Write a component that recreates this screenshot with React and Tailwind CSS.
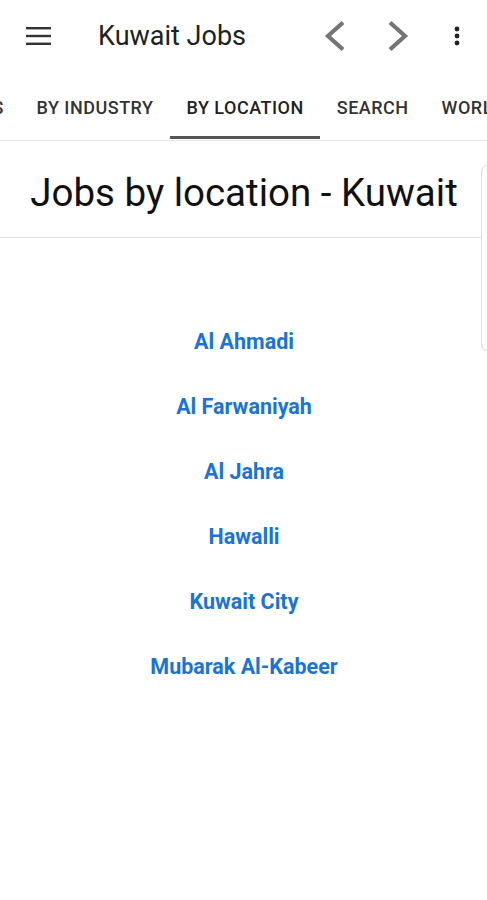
import React from 'react';

const tabs = ['BY INDUSTRY', 'BY LOCATION', 'SEARCH', 'WORLD JOBS'];

const locations = ['Al Ahmadi', 'Al Farwaniyah', 'Al Jahra', 'Hawalli', 'Kuwait City', 'Mubarak Al-Kabeer'];

const App = () => {
    return (
        <div className="w-[487px] h-[900px] bg-white overflow-hidden" style={{ fontFamily: 'Roboto, "Liberation Sans", sans-serif' }}>
            {/* Toolbar */}
            <div className="h-[72px] flex items-center">
                <svg className="ml-[26px]" width="25" height="18" viewBox="0 0 25 18">
                    <rect x="0" y="0" width="25" height="2.4" fill="#333" />
                    <rect x="0" y="7.8" width="25" height="2.4" fill="#333" />
                    <rect x="0" y="15.6" width="25" height="2.4" fill="#333" />
                </svg>
                <div className="ml-[47px] text-[27px] text-[#212121] leading-none">Kuwait Jobs</div>
                <div className="ml-auto flex items-center">
                    <svg width="26" height="32" viewBox="0 0 26 32">
                        <path d="M22 2.5 L7 16 L22 29.5" fill="none" stroke="#757575" strokeWidth="4.2" />
                    </svg>
                    <svg width="26" height="32" viewBox="0 0 26 32" className="ml-[39px]">
                        <path d="M4 2.5 L19 16 L4 29.5" fill="none" stroke="#757575" strokeWidth="4.2" />
                    </svg>
                    <svg width="6" height="20" viewBox="0 0 6 20" className="ml-[42px] mr-[27px]">
                        <circle cx="3" cy="3" r="2.4" fill="#222" />
                        <circle cx="3" cy="10" r="2.4" fill="#222" />
                        <circle cx="3" cy="17" r="2.4" fill="#222" />
                    </svg>
                </div>
            </div>

            {/* Tabs */}
            <div className="h-[69px] border-b border-[#e4e4e4] flex items-stretch overflow-hidden whitespace-nowrap">
                <div className="w-[20px] shrink-0 overflow-hidden flex justify-end items-center">
                    <span className="pr-[16px] mt-[2px] text-[18px] font-medium tracking-[0.5px] text-[#333]">JOBS</span>
                </div>
                {tabs.map((t) => {
                    const active = t === 'BY LOCATION';
                    return (
                        <div key={t} className={`relative shrink-0 flex items-center px-[16.5px] text-[18px] font-medium tracking-[0.5px] ${active ? 'text-[#222]' : 'text-[#333]'}`}>
                            <span className="mt-[2px]">{t}</span>
                            {active && <div className="absolute left-0 right-0 bottom-[1px] h-[3px] bg-[#555]" />}
                        </div>
                    );
                })}
            </div>

            {/* Content */}
            <div className="flex items-start">
                <div className="w-[481px] shrink-0">
                    <div className="h-[97px] border-b border-[#e2e2e2] flex items-center justify-center pl-[7px]">
                        <h1 className="text-[38.5px] text-[#111] leading-none mt-[9px]">Jobs by location - Kuwait</h1>
                    </div>
                    <div className="pt-[91px] pl-[7px] flex flex-col items-center gap-[39px]">
                        {locations.map((loc) => (
                            <a key={loc} href="#" className="text-[21.5px] leading-[26px] font-bold text-[#1a73d9]">{loc}</a>
                        ))}
                    </div>
                </div>
                <div className="mt-[23px] w-[20px] h-[188px] shrink-0 border border-[#dcdcdc] rounded-[8px]" />
            </div>
        </div>
    );
};

export default App;
